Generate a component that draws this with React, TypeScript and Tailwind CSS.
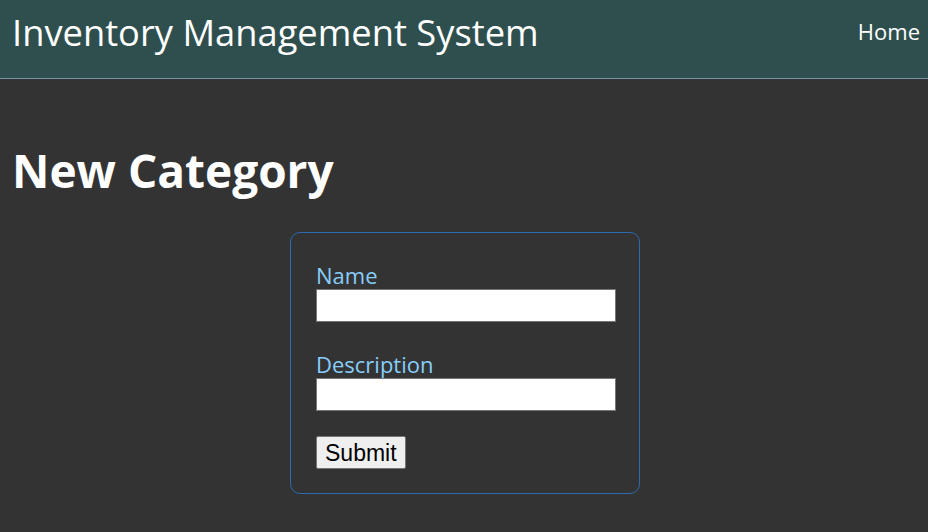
export default function App() {
  return (
    <div className="min-h-[532px] bg-[#333333] font-['Open_Sans',sans-serif]">
      <header className="flex h-[79px] items-start justify-between border-b border-[#7593a3] bg-[#2f4f4f] pl-3 pr-2">
        <div className="mt-[8px] text-[36.3px] leading-[48px] text-white">Inventory Management System</div>
        <nav className="mt-[16px] text-[22px] leading-[30px] text-white">Home</nav>
      </header>
      <main className="px-3">
        <h1 className="mt-[62px] text-[46px] font-bold leading-[58px] text-white">New Category</h1>
        <form className="mx-auto mt-[33px] flex w-[350px] translate-x-[1px] flex-col rounded-[10px] border border-[#2d6aae] px-[25px] pb-[24px] pt-[28px]">
          <label className="text-[22px] leading-[28px] text-[#87cefa]">Name</label>
          <input className="h-[33px] w-[300px] border border-[#767676] bg-white" />
          <label className="mt-[28px] text-[22px] leading-[28px] text-[#87cefa]">Description</label>
          <input className="h-[33px] w-[300px] border border-[#767676] bg-white" />
          <div className="mt-[25px]">
            <button type="button" className="h-[33px] rounded-[2px] border border-[#767676] bg-[#efefef] px-[8px] font-['Liberation_Sans',sans-serif] text-[23px] leading-[28px] text-black">Submit</button>
          </div>
        </form>
      </main>
    </div>
  );
}
